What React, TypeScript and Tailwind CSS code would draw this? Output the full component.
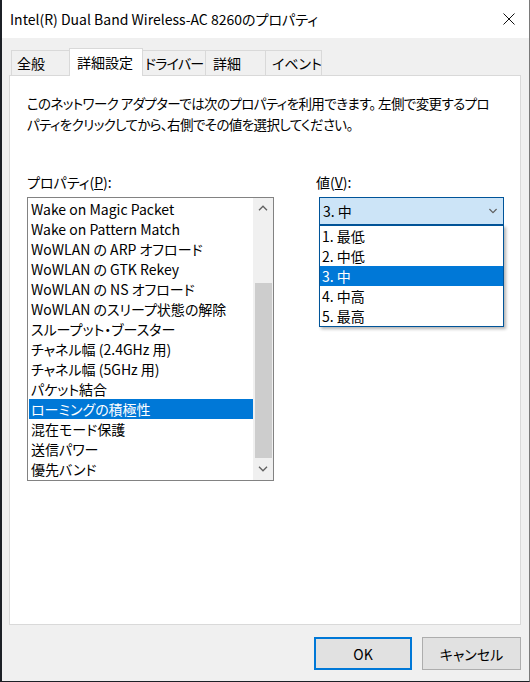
import React from 'react';

const properties = [
  'Wake on Magic Packet',
  'Wake on Pattern Match',
  'WoWLAN の ARP オフロード',
  'WoWLAN の GTK Rekey',
  'WoWLAN の NS オフロード',
  'WoWLAN のスリープ状態の解除',
  'スループット・ブースター',
  'チャネル幅 (2.4GHz 用)',
  'チャネル幅 (5GHz 用)',
  'パケット結合',
  'ローミングの積極性',
  '混在モード保護',
  '送信パワー',
  '優先バンド',
];

const values = ['1. 最低', '2. 中低', '3. 中', '4. 中高', '5. 最高'];

const tabs = [
  { label: '全般', cls: 'mt-[2px] h-[25px] w-[58px] border-l border-t pl-[5px]' },
  { label: '詳細設定', cls: 'h-[28px] w-[74px] border-l border-t border-r bg-white pl-[7px] pb-[2px]' },
  { label: 'ドライバー', cls: 'mt-[2px] h-[25px] w-[63px] border-t border-r pl-[2px] tracking-[-0.8px]' },
  { label: '詳細', cls: 'mt-[2px] h-[25px] w-[60px] border-t border-r pl-[7px]' },
  { label: 'イベント', cls: 'mt-[2px] h-[25px] w-[56px] border-t border-r pl-[6px]' },
];

const Chevron = ({ up = false, className = '' }: { up?: boolean; className?: string }) => (
  <svg width="10" height="6" viewBox="0 0 10 6" className={className}>
    <path
      d={up ? 'M1 5.2L5 1.2L9 5.2' : 'M1 0.8L5 4.8L9 0.8'}
      fill="none"
      stroke="#606060"
      strokeWidth="1.3"
    />
  </svg>
);

const App = () => {
  return (
    <div className="w-[530px] h-[682px] flex flex-col bg-[#f0f0f0] border-l-2 border-r border-b border-l-[#1c2026] border-r-[#7a7a7a] border-b-[#1c2026] text-black font-['Noto_Sans_CJK_JP',sans-serif] [font-feature-settings:'palt'] text-[14px] leading-none overflow-hidden">
      {/* Title bar */}
      <div className="h-[38px] bg-white flex items-center pl-[8px] pr-[14px] shrink-0">
        <span className="flex-1 text-[14px] whitespace-nowrap">
          Intel(R) Dual Band Wireless-AC 8260のプロパティ
        </span>
        <svg width="12" height="12" viewBox="0 0 12 12">
          <path d="M0.5 0.5L11.5 11.5M11.5 0.5L0.5 11.5" stroke="#111" strokeWidth="1" />
        </svg>
      </div>

      {/* Body */}
      <div className="flex-1 flex flex-col pl-[7px] pr-[8px] pt-[10px] pb-[11px]">
        {/* Tabs */}
        <div className="flex items-start h-[28px] -mb-px pl-[2px] relative z-10">
          {tabs.map((t) => (
            <div
              key={t.label}
              className={`flex items-center whitespace-nowrap border-[#d9d9d9] ${t.cls}`}
            >
              {t.label}
            </div>
          ))}
        </div>

        {/* Tab page */}
        <div className="flex-1 bg-white border border-[#d9d9d9] pl-[17px] pt-[17px]">
          <div className="leading-[21px] whitespace-nowrap text-[13.5px] tracking-[-0.6px]">
            <div>このネットワーク アダプターでは次のプロパティを利用できます。 左側で変更するプロ</div>
            <div>パティをクリックしてから、右側でその値を選択してください。</div>
          </div>

          <div className="flex mt-[37px]">
            {/* Property list */}
            <div className="w-[247px]">
              <div className="h-[20px] leading-[20px] mb-[5px]">
                プロパティ(<span className="underline">P</span>):
              </div>
              <div className="h-[284px] border border-[#828282] flex">
                <div className="flex-1 pt-px">
                  {properties.map((p, i) => (
                    <div
                      key={p}
                      className={
                        i === 10
                          ? 'h-[20px] leading-[20px] ml-px pl-[2px] whitespace-nowrap bg-[#0078d7] text-white'
                          : 'h-[20px] leading-[20px] ml-px pl-[2px] whitespace-nowrap'
                      }
                    >
                      {p}
                    </div>
                  ))}
                </div>
                <div className="w-[20px] bg-[#f0f0f0] flex flex-col items-center">
                  <div className="h-[20px] flex items-center justify-center">
                    <Chevron up />
                  </div>
                  <div className="h-[65px]" />
                  <div className="w-[17px] h-[175px] bg-[#cdcdcd]" />
                  <div className="flex-1 flex items-center justify-center">
                    <Chevron />
                  </div>
                </div>
              </div>
            </div>

            {/* Value combo */}
            <div className="ml-[42px]">
              <div className="h-[20px] leading-[20px] mb-[5px]">
                値(<span className="underline">V</span>):
              </div>
              <div className="relative ml-[3px] w-[185px]">
                <div className="h-[28px] bg-[#cce4f7] border border-[#005499] flex items-center pl-[3px] pr-[5px]">
                  <span className="flex-1">3. 中</span>
                  <Chevron className="scale-90" />
                </div>
                <div className="absolute left-0 top-[28px] w-[185px] bg-white border border-[#005499] shadow-[2px_2px_3px_rgba(0,0,0,0.3)]">
                  {values.map((v, i) => (
                    <div
                      key={v}
                      className={
                        i === 2
                          ? 'h-[20px] leading-[20px] pl-[2px] bg-[#0078d7] text-white'
                          : 'h-[20px] leading-[20px] pl-[2px]'
                      }
                    >
                      {v}
                    </div>
                  ))}
                </div>
              </div>
            </div>
          </div>
        </div>

        {/* Buttons */}
        <div className="flex justify-end gap-[10px] mt-[12px]">
          <button className="w-[98px] h-[33px] bg-[#e1e1e1] border-2 border-[#0078d7] text-[14px]">
            OK
          </button>
          <button className="w-[99px] h-[33px] bg-[#e1e1e1] border border-[#adadad] text-[14px]">
            キャンセル
          </button>
        </div>
      </div>
    </div>
  );
};

export default App;
